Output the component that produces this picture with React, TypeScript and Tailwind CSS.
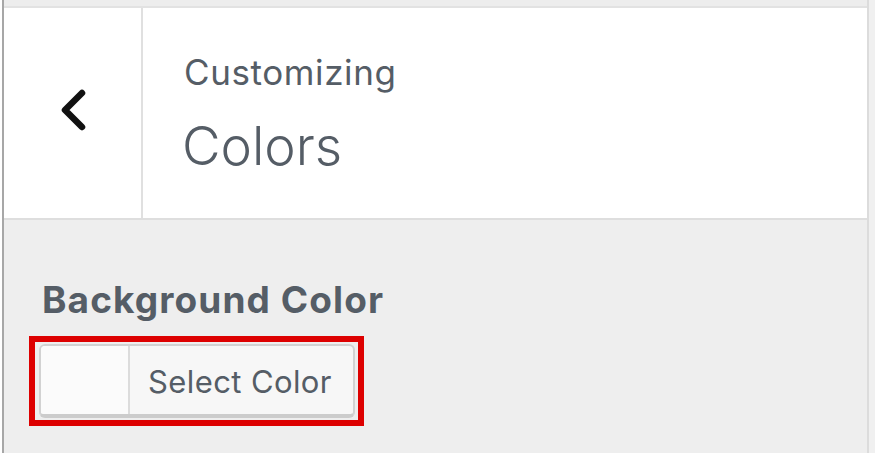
import React from 'react';

const font = { fontFamily: 'Inter, "Liberation Sans", Arial, sans-serif' };

export default function App() {
  return (
    <div className="w-[875px] h-[458px] bg-white overflow-hidden" style={font}>
      <div className="flex h-[453px]">
        {/* Panel */}
        <div className="ml-[2px] w-[867px] h-full flex flex-col border-l-2 border-r-2 border-l-[#a7a7a7] border-r-[#dcdcdc] bg-[#eeeeee]">
          {/* Top strip */}
          <div className="h-[8px] border-b-2 border-[#e2e2e2] bg-[#ededed]" />

          {/* Header */}
          <div className="h-[212px] flex bg-white border-b-2 border-[#dedede]">
            <div className="w-[139px] flex items-center justify-center border-r-2 border-[#e0e0e0]">
              <svg width="40" height="50" viewBox="0 0 40 50" className="mb-[4px]">
                <path d="M29 7 L12 24 L29 41" fill="none" stroke="#111" strokeWidth="6.5" strokeLinecap="round" strokeLinejoin="round" />
              </svg>
            </div>
            <div className="flex flex-col pl-[41px] pt-[44px]">
              <span className="text-[35px] leading-[40px] text-[#555d66] tracking-[0.6px]">Customizing</span>
              <span className="text-[53px] leading-[60px] font-light text-[#555d66] mt-[24px] -ml-[2px]">Colors</span>
            </div>
          </div>

          {/* Control section */}
          <div className="flex-1 flex flex-col pt-[57px] pl-[25px]">
            <span className="pl-[13px] text-[37px] leading-[46px] font-bold text-[#555d66] tracking-[1.1px]">Background Color</span>
            <div className="mt-[13px] w-[335px] h-[90px] border-[6px] border-[#dd0000] pl-[4px] pt-[2px]">
              <div className="w-[316px] h-[74px] flex rounded-[6px] border-2 border-[#d2d2d2] border-b-[4px] border-b-[#cccccc] bg-[#f7f7f7] overflow-hidden">
                <div className="w-[89px] h-full bg-[#fbfbfb] border-r-2 border-[#dcdcdc]" />
                <div className="flex-1 flex items-center pl-[18px] pt-[4px] text-[31px] text-[#555d66] tracking-[0.4px]">Select Color</div>
              </div>
            </div>
          </div>
        </div>
        <div className="flex-1 bg-[#f0f0f0]" />
      </div>
    </div>
  );
}
